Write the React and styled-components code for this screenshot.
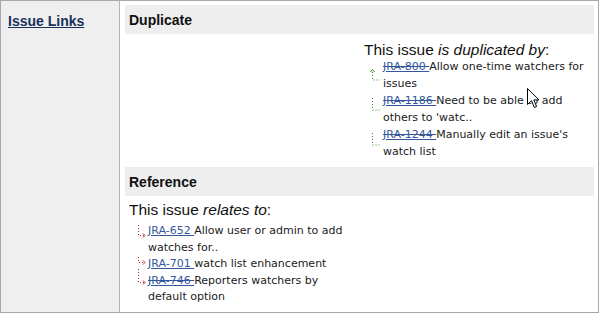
import React from 'react'
import styled, { createGlobalStyle } from 'styled-components'

const GlobalStyle = createGlobalStyle`
  html, body { margin: 0; padding: 0; background: #fff; }
  body { font-family: "Liberation Sans", Arial, sans-serif; }
`

const Frame = styled.div`
  position: relative;
  box-sizing: border-box;
  width: 599px;
  height: 313px;
  border: 1px solid #a8a8a8;
  display: flex;
  background: #fff;
`

const Side = styled.div`
  width: 119px;
  flex-shrink: 0;
  background: #efefef;
  border-right: 1px solid #b4b4b4;
  padding: 11px 0 0 7px;
  box-sizing: border-box;
`

const SideTitle = styled.a`
  font-family: "Liberation Sans", Arial, sans-serif;
  font-size: 14px;
  font-weight: bold;
  color: #17305c;
  text-decoration: underline;
`

const Main = styled.div`
  flex: 1;
  padding: 4px 4px 0 5px;
  display: flex;
  flex-direction: column;
`

const Header = styled.div`
  background: #eeeeee;
  height: 29px;
  display: flex;
  align-items: center;
  padding-left: 4px;
  font-size: 14px;
  font-weight: bold;
  color: #111;
`

const Body = styled.div`
  display: flex;
  flex-direction: column;
  align-items: ${p => (p.$right ? 'flex-end' : 'flex-start')};
  padding: ${p => p.$pad};
`

const Block = styled.div`
  width: ${p => p.$width};
`

const Lead = styled.div`
  font-size: 15.5px;
  color: #111;
  line-height: 16px;
  em { font-style: italic; }
`

const List = styled.ul`
  list-style: none;
  margin: ${p => p.$top} 0 0;
  padding: 0 0 0 ${p => p.$indent};
`

const Item = styled.li`
  position: relative;
  font-family: "DejaVu Sans", Verdana, sans-serif;
  font-size: 11px;
  line-height: ${p => p.$line};
  color: #1a1a1a;
  width: ${p => p.$width};
`

const Connector = styled.svg`
  position: absolute;
  left: -13px;
  top: ${p => p.$top};
  overflow: visible;
`

const IssueKey = styled.a`
  color: #35579a;
  text-decoration: ${p => (p.$resolved ? 'underline line-through' : 'underline')};
  white-space: pre;
`

const Cursor = styled.svg`
  position: absolute;
  left: 526px;
  top: 87px;
`

function UpHook({ top, h, arrow }) {
  return (
    <Connector width="12" height={h} viewBox={`0 0 12 ${h}`} $top={top}>
      {arrow && <path d="M0.5 3 L2.5 0.5 L4.5 3" stroke="#3a8a2a" strokeWidth="1" fill="none" />}
      <path d={`M2.5 ${arrow ? 3 : 0} V${h - 1} H10`} stroke="#3a8a2a" strokeWidth="1" strokeDasharray="1 2" fill="none" />
    </Connector>
  )
}

function RightArrow({ top, h }) {
  return (
    <Connector width="12" height={h} viewBox={`0 0 12 ${h}`} $top={top}>
      <path d={`M3.5 0 V${h - 2.5} H9`} stroke="#b02828" strokeWidth="1" strokeDasharray="1 2" fill="none" />
      <path d={`M8 ${h - 4.5} L10 ${h - 2.5} L8 ${h - 0.5}`} stroke="#b02828" strokeWidth="1" fill="none" />
    </Connector>
  )
}

const duplicates = [
  { key: 'JRA-800', text: 'Allow one-time watchers for issues', resolved: true, top: '11px', h: 12, arrow: true },
  { key: 'JRA-1186', text: "Need to be able to add others to 'watc..", resolved: true, top: '6px', h: 13 },
  { key: 'JRA-1244', text: "Manually edit an issue's watch list", resolved: true, top: '7px', h: 13 },
]

const references = [
  { key: 'JRA-652', text: 'Allow user or admin to add watches for..', resolved: false, top: '2px', h: 13 },
  { key: 'JRA-701', text: 'watch list enhancement', resolved: false, top: '1px', h: 8 },
  { key: 'JRA-746', text: 'Reporters watchers by default option', resolved: true, top: '-4px', h: 16 },
]

export default function App() {
  return (
    <>
      <GlobalStyle />
      <Frame>
        <Side>
          <SideTitle href="#">Issue Links</SideTitle>
        </Side>
        <Main>
          <Header>Duplicate</Header>
          <Body $right $pad="8px 0 7px">
            <Block $width="230px">
              <Lead>This issue <em>is duplicated by</em>:</Lead>
              <List $indent="19px" $top="0px">
                {duplicates.map(d => (
                  <Item key={d.key} $width="207px" $line="17px">
                    <UpHook top={d.top} h={d.h} arrow={d.arrow} />
                    <IssueKey href="#" $resolved={d.resolved}>{d.key + ' '}</IssueKey>
                    {d.text}
                  </Item>
                ))}
              </List>
            </Block>
          </Body>
          <Header>Reference</Header>
          <Body $pad="6px 0 0 4px">
            <Lead>This issue <em>relates to</em>:</Lead>
            <List $indent="19px" $top="5px">
              {references.map(r => (
                <Item key={r.key} $width="204px" $line="16.5px">
                  <RightArrow top={r.top} h={r.h} />
                  <IssueKey href="#" $resolved={r.resolved}>{r.key + ' '}</IssueKey>
                  {r.text}
                </Item>
              ))}
            </List>
          </Body>
        </Main>
        <Cursor width="13" height="21" viewBox="0 0 13 21">
          <path d="M0.5 0.5 V16.5 L4.5 12.7 L7.3 19.5 L9.6 18.5 L6.8 11.9 L12 11.9 Z" fill="#fff" stroke="#000" strokeWidth="1" strokeLinejoin="miter" />
        </Cursor>
      </Frame>
    </>
  )
}
